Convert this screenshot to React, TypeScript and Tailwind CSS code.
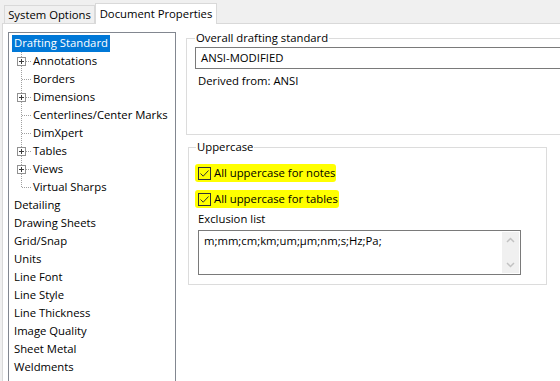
import { Fragment } from "react";

type TreeItem = {
  label: string;
  child?: boolean;
  expandable?: boolean;
  last?: boolean;
  selected?: boolean;
};

const treeItems: TreeItem[] = [
  { label: "Drafting Standard", selected: true },
  { label: "Annotations", child: true, expandable: true },
  { label: "Borders", child: true },
  { label: "Dimensions", child: true, expandable: true },
  { label: "Centerlines/Center Marks", child: true },
  { label: "DimXpert", child: true },
  { label: "Tables", child: true, expandable: true },
  { label: "Views", child: true, expandable: true },
  { label: "Virtual Sharps", child: true, last: true },
  { label: "Detailing" },
  { label: "Drawing Sheets" },
  { label: "Grid/Snap" },
  { label: "Units" },
  { label: "Line Font" },
  { label: "Line Style" },
  { label: "Line Thickness" },
  { label: "Image Quality" },
  { label: "Sheet Metal" },
  { label: "Weldments" },
];

// dotted connector + optional [+] box drawn at the left of child rows
function TreeGuide({ expandable, last }: { expandable?: boolean; last?: boolean }) {
  return (
    <svg width="20" height="18" viewBox="0 0 20 18" className="shrink-0" shapeRendering="crispEdges">
      <line x1="9.5" y1="0" x2="9.5" y2={last ? 10 : 18} stroke="#a0a0a0" strokeDasharray="1 1" />
      <line x1="10" y1="9.5" x2="20" y2="9.5" stroke="#a0a0a0" strokeDasharray="1 1" />
      {expandable && (
        <Fragment>
          <rect x="5.5" y="5.5" width="8" height="8" fill="#ffffff" stroke="#919191" />
          <line x1="7" y1="9.5" x2="12" y2="9.5" stroke="#3c3c3c" />
          <line x1="9.5" y1="7" x2="9.5" y2="12" stroke="#3c3c3c" />
        </Fragment>
      )}
    </svg>
  );
}

function CheckRow({ label }: { label: string }) {
  return (
    <div className="flex items-center h-[26px]">
      {/* marker highlight */}
      <div className="flex items-center gap-[3px] bg-[#ffff00] rounded-[3px] h-[18px] pl-[3px] pr-[1px] ml-[-3px]">
        <span className="w-[13px] h-[13px] border border-[#333333] bg-[#ffff00] flex items-center justify-center">
          <svg width="11" height="11" viewBox="0 0 11 11">
            <path d="M1.5 5.5 L4.2 8.2 L9.5 2.5" fill="none" stroke="#333333" strokeWidth="1" />
          </svg>
        </span>
        <span className="leading-[16px]">{label}</span>
      </div>
    </div>
  );
}

export default function App() {
  return (
    <div className="w-[560px] h-[381px] overflow-hidden bg-[#f0f0f0] flex flex-col text-[11.3px] text-black font-['Open_Sans',sans-serif]">
      {/* Tabs */}
      <div className="h-[23px] flex items-end pl-[4px] shrink-0">
        <div className="h-[18px] w-[91px] border border-b-0 border-[#d9d9d9] flex items-center justify-center leading-[16px]">
          System Options
        </div>
        <div className="relative z-10 h-[21px] mb-[-1px] w-[122px] bg-white border border-b-0 border-[#d9d9d9] flex items-center justify-center leading-[16px]">
          Document Properties
        </div>
      </div>

      {/* Panel */}
      <div className="flex-1 ml-[2px] bg-white border-t border-l border-[#d9d9d9] flex pl-[5px]">
        {/* Tree */}
        <div className="mt-[8px] w-[168px] h-[400px] border border-[#828790] pt-[1px] pl-[3px] shrink-0">
          {treeItems.map((item) =>
            item.child ? (
              <div key={item.label} className="flex items-center h-[18px]">
                <TreeGuide expandable={item.expandable} last={item.last} />
                <span className="pl-[1px] leading-[16px] whitespace-nowrap">{item.label}</span>
              </div>
            ) : (
              <div key={item.label} className="flex items-center h-[18px]">
                <span
                  className={
                    item.selected
                      ? "bg-[#0078d7] text-white px-[2px] h-[17px] flex items-center leading-[16px] whitespace-nowrap"
                      : "px-[2px] leading-[16px] whitespace-nowrap"
                  }
                >
                  {item.label}
                </span>
              </div>
            )
          )}
        </div>

        {/* Right side */}
        <div className="ml-[10px] mt-[6px] flex flex-col">
          <fieldset className="w-[400px] h-[105px] border border-[#dcdcdc] pl-[8px]">
            <legend className="px-[1px] leading-[16px]">Overall drafting standard</legend>
            <div className="mt-[1px] h-[22px] border border-[#7a7a7a] flex items-center pl-[5px] leading-[16px]">
              ANSI-MODIFIED
            </div>
            <div className="mt-[4px] ml-[3px] leading-[16px]">Derived from: ANSI</div>
          </fieldset>

          <fieldset className="mt-[4px] ml-[2px] w-[359px] h-[146px] border border-[#dcdcdc] pl-[7px]">
            <legend className="px-[1px] leading-[16px]">Uppercase</legend>
            <div className="ml-[2px] mt-[5px]">
              <CheckRow label="All uppercase for notes" />
              <CheckRow label="All uppercase for tables" />
              <div className="leading-[16px] mt-[-1px]">Exclusion list</div>
              <div className="mt-[3px] w-[323px] h-[45px] border border-[#7a7a7a] flex">
                <div className="flex-1 pl-[5px] pt-[2px] leading-[16px]">m;mm;cm;km;um;µm;nm;s;Hz;Pa;</div>
                <div className="w-[17px] my-[1px] mr-[1px] bg-[#f0f0f0] flex flex-col justify-between items-center py-[5px]">
                  <svg width="9" height="6" viewBox="0 0 9 6">
                    <path d="M1 5 L4.5 1.5 L8 5" fill="none" stroke="#c2c2c2" strokeWidth="1.5" />
                  </svg>
                  <svg width="9" height="6" viewBox="0 0 9 6">
                    <path d="M1 1 L4.5 4.5 L8 1" fill="none" stroke="#c2c2c2" strokeWidth="1.5" />
                  </svg>
                </div>
              </div>
            </div>
          </fieldset>
        </div>
      </div>
    </div>
  );
}
